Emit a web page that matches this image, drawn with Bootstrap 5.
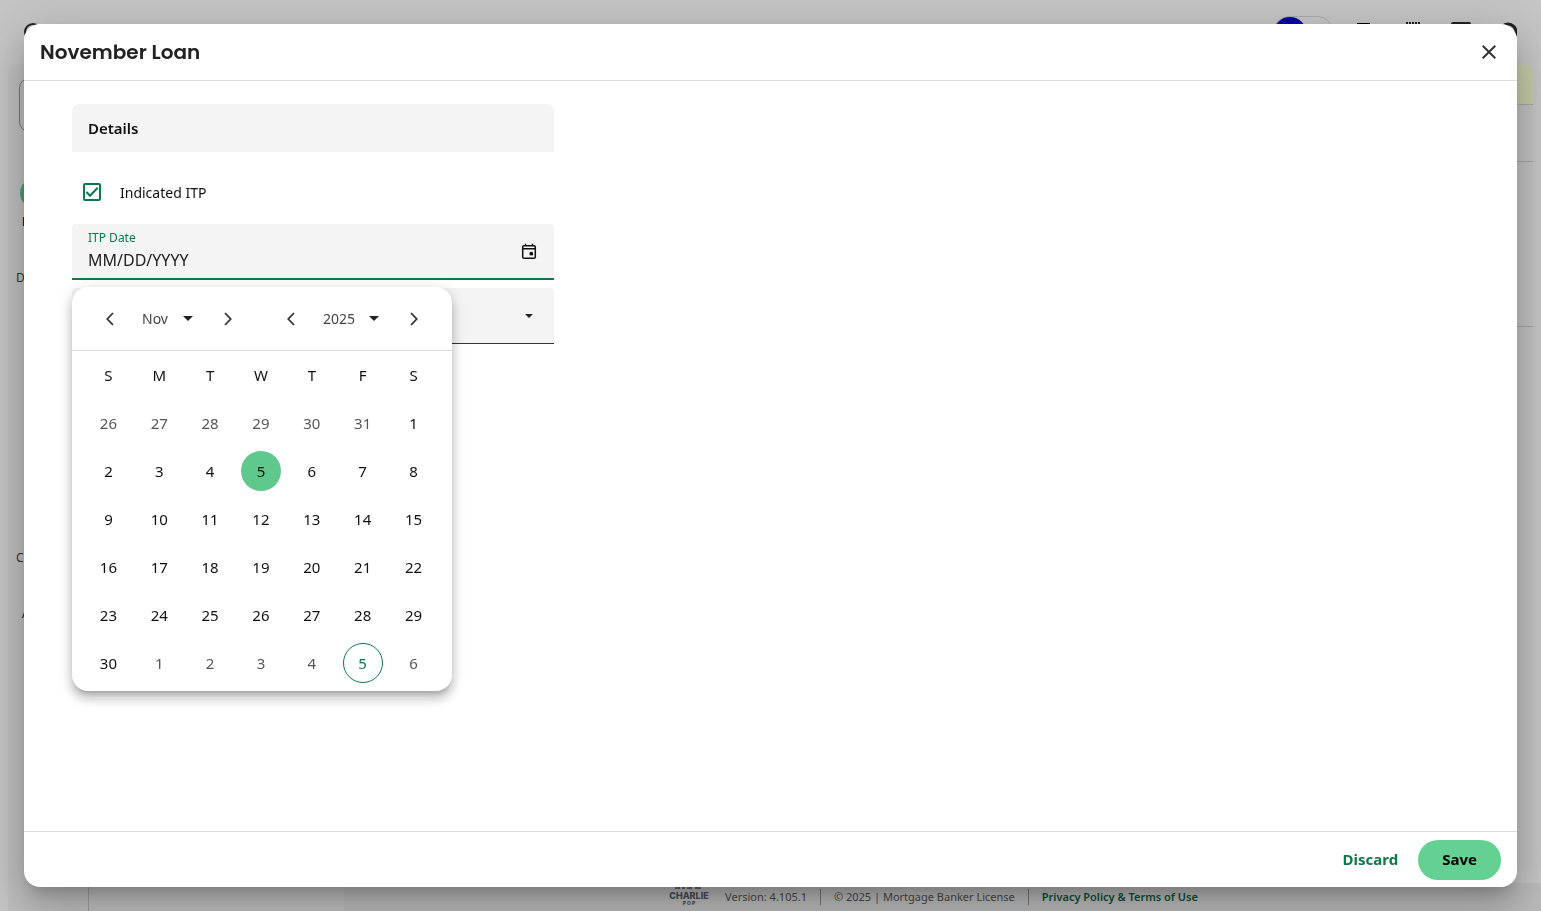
<!DOCTYPE html>
<html lang="en">
<head>
<meta charset="utf-8">
<meta name="viewport" content="width=device-width, initial-scale=1">
<title>November Loan</title>
<link href="https://cdn.jsdelivr.net/npm/bootstrap@5.3.0/dist/css/bootstrap.min.css" rel="stylesheet">
<style>
  :root { --brand: #0b7a4b; --mint: #62d192; --fill: #f4f4f4; --line: #ddd; }
  body { font-family: "Noto Sans", "Open Sans", sans-serif; font-size: 14px; background: #c5c5c5; color: #111; }

  /* Dimmed page behind the dialog */
  .topbar { height: 64px; padding: 0 24px; }
  .brand-ring { width: 18px; height: 18px; border: 2px solid #222; border-radius: 50%; }
  .user-pill { width: 60px; height: 32px; border: 1px solid #aaa; border-radius: 16px; }
  .user-dot { width: 32px; height: 30px; border-radius: 50%; background: #0808a0; }
  .top-icons { gap: 24px; }
  .rail { width: 81px; margin-left: 8px; border-right: 1px solid #a0a0a0; border-top-left-radius: 12px; background: #c0c0c0; font-size: 12px; color: #333; }
  .rail-box { height: 54px; margin: 14px 8px 0 11px; border: 1px solid #777; border-radius: 10px; }
  .rail-dot { width: 30px; height: 30px; margin: 46px 0 5px 12px; border-radius: 50%; background: #4a9e72; }
  .rail-main { padding-left: 14px; font-weight: 700; color: #000; }
  .rail-text { padding-left: 8px; }
  .gap-small { margin-top: 38px; }
  .gap-large { margin-top: 262px; }
  .panel { width: 255px; background: #c0c0c0; }
  .content-area { min-width: 0; }
  .sheet { margin-right: 8px; background: #c2c2c2; border-radius: 0 8px 8px 0; }
  .sheet div { border-bottom: 1px solid #a6a6a6; }
  .sheet-tint { height: 41px; background: #c5cbaa; border-top-right-radius: 8px; }
  .sheet-a { height: 57px; }
  .sheet-b { height: 165px; }
  .foot { height: 28px; margin-top: 11px; padding-right: 20px; font-size: 11px; color: #474747; background: #bbb; }
  .foot a { color: #0a5233; font-weight: 600; }
  .foot .bar { width: 1px; height: 16px; margin: 0 13px; background: #777; }

  /* Dialog */
  .loan-modal { --bs-modal-margin: 24px; --bs-modal-width: none; --bs-modal-border-radius: 16px; --bs-modal-border-width: 0; }
  .loan-modal .modal-dialog { margin: 24px; max-width: none; height: calc(100% - 48px); }
  .loan-modal .modal-content { height: 100%; overflow: hidden; box-shadow: 0 11px 15px -7px rgba(0,0,0,.2), 0 24px 38px 3px rgba(0,0,0,.14), 0 9px 46px 8px rgba(0,0,0,.12); }
  .loan-modal .modal-header { height: 56px; padding: 0 16px; border: 0; }
  .loan-modal .modal-title { font-family: Poppins, Inter, sans-serif; font-size: 20px; font-weight: 600; color: #222; }
  .loan-modal .modal-body { padding: 24px 0 24px 48px; box-shadow: inset 0 1px var(--line); }
  .loan-modal .modal-footer { height: 56px; padding: 0 16px; border-top: 1px solid var(--line); }
  .icon-btn { width: 40px; height: 40px; padding: 0; border: 0; background: none; color: #333; display: inline-flex; align-items: center; justify-content: center; }
  .close-btn { width: 24px; }
  .btn-pill { height: 40px; padding: 0 24px; border: 0; border-radius: 20px; font-size: 15px; font-weight: 700; }
  .btn-discard { padding: 0 20px; color: var(--brand); }
  .btn-save, .btn-save:hover { background: var(--mint); color: #000; }

  .section-head { height: 48px; margin-bottom: 20px; padding: 0 16px; background: var(--fill); border-radius: 8px 8px 0 0; font-size: 15px; font-weight: 600; }
  .check-row { height: 40px; margin-bottom: 12px; padding: 0 11px; gap: 19px; }
  .check-row .form-check-input { width: 18px; height: 18px; margin: 0; border: 2px solid var(--brand); border-radius: 2px; background-color: #fff; }
  .check-row .form-check-input:checked { background-size: 18px; background-image: url("data:image/svg+xml,%3Csvg xmlns='http://www.w3.org/2000/svg' viewBox='0 0 18 18'%3E%3Cpath fill='none' stroke='%230b7a4b' stroke-width='2' d='M3.500 9l3.500 3.700L14.700 4.800'/%3E%3C/svg%3E"); }
  .field { height: 56px; margin-bottom: 8px; background: var(--fill); border-radius: 4px 4px 0 0; }
  .date-field { padding: 0 5px 0 16px; border-bottom: 2px solid var(--brand); }
  .date-field label { display: block; font-size: 12px; line-height: 16px; color: var(--brand); }
  .date-field input { display: block; width: 100%; height: 26px; padding: 2px 0 0; border: 0; outline: 0; background: none; font-size: 16px; color: #222; }
  .date-field input::placeholder { color: #222; opacity: 1; }
  .plain-select { appearance: none; border: 0; outline: 0; color: #444; background: no-repeat right 15px center / 10px 5px url("data:image/svg+xml,%3Csvg xmlns='http://www.w3.org/2000/svg' viewBox='0 0 10 5'%3E%3Cpath d='M0 0h10L5 5z' fill='%23222'/%3E%3C/svg%3E"); }
  .type-select { display: block; width: 100%; border-bottom: 1px solid #333; background-color: var(--fill); background-position: right 21px center; background-size: 8px 4px; }

  /* Date picker */
  .picker { top: 100%; left: 0; z-index: 5; width: 380px; margin-top: 9px; background: #fff; border-radius: 16px; box-shadow: 0 5px 5px -3px rgba(0,0,0,.2), 0 8px 10px 1px rgba(0,0,0,.14), 0 3px 14px 2px rgba(0,0,0,.12); }
  .picker-head { height: 64px; padding: 0 18px; border-bottom: 1px solid var(--line); }
  .picker-head select { height: 40px; padding: 0 0 0 12px; font-size: 14px; }
  .month-select { width: 78px; }
  .year-select { width: 83px; }
  .picker-grid { padding: 0 13px 4px 11px; }
  .picker-grid table { width: 100%; table-layout: fixed; font-size: 15px; text-align: center; }
  .picker-grid th, .picker-grid td { height: 48px; padding: 0; vertical-align: middle; font-weight: 400; }
  .day { width: 40px; height: 40px; padding: 0; border: 0; border-radius: 50%; background: none; color: #111; }
  .day.other { color: #555; }
  .day.today { background: #5fc88d; }
  .day.picked { border: 1px solid var(--brand); color: var(--brand); }
</style>
</head>
<body>
<div class="d-flex flex-column vh-100 overflow-hidden">
  <header class="topbar d-flex align-items-center justify-content-between">
    <div class="brand-ring"></div>
    <div class="top-icons d-flex align-items-center">
      <div class="user-pill"><div class="user-dot"></div></div>
      <svg width="20" height="20" viewBox="0 0 20 20"><path d="M0 1h13v18H0z"/></svg>
      <svg width="24" height="20" viewBox="0 0 24 20" fill="none" stroke="#222" stroke-width="2"><path stroke-dasharray="2 1" d="M5 1h15"/><path d="M5 3h15v15H5z"/></svg>
      <svg width="24" height="20" viewBox="0 0 24 20" fill="#222"><rect x="2" width="20" height="18" rx="2"/></svg>
      <svg width="20" height="24" viewBox="0 0 20 24" fill="none" stroke="#222" stroke-width="3"><circle cx="11" cy="12" r="8"/></svg>
    </div>
  </header>
  <div class="d-flex flex-grow-1">
    <nav class="rail">
      <div class="rail-box"></div>
      <div class="rail-dot"></div>
      <div class="rail-main">H</div>
      <div class="rail-text gap-small">D</div>
      <div class="rail-text gap-large">C</div>
      <div class="rail-main fw-normal gap-small">A</div>
    </nav>
    <div class="panel"></div>
    <main class="content-area d-flex flex-column flex-grow-1">
      <div class="sheet flex-grow-1">
        <div class="sheet-tint"></div>
        <div class="sheet-a"></div>
        <div class="sheet-b"></div>
      </div>
      <footer class="foot d-flex align-items-center justify-content-center">
        <svg width="58" height="24" viewBox="0 0 58 24" font-family="Inter, sans-serif" font-weight="800" fill="#4c4c55" text-anchor="middle"><path d="M8 3h5m2 0h3m2 0h5m3 0h6" stroke="#666" stroke-width="2"/><text x="22" y="14" font-size="9">CHARLIE</text><text x="22" y="20" font-size="5">P O P</text></svg>
        <span>Version: 4.105.1</span><span class="bar"></span>
        <span>© 2025 | Mortgage Banker License</span><span class="bar"></span>
        <a href="#" class="text-decoration-none">Privacy Policy &amp; Terms of Use</a>
      </footer>
    </main>
  </div>
</div>

<div class="modal loan-modal d-block" role="dialog" aria-modal="true" aria-labelledby="dialogTitle">
  <div class="modal-dialog">
    <div class="modal-content">
      <div class="modal-header">
        <h1 class="modal-title" id="dialogTitle">November Loan</h1>
        <button type="button" class="icon-btn close-btn" aria-label="Close"><svg width="14" height="14" viewBox="0 0 14 14" fill="none" stroke="currentColor" stroke-width="2"><path d="M.7.7l12.600 12.600M13.300.7L.7 13.300"/></svg></button>
      </div>
      <div class="modal-body">
        <form class="row g-0">
          <div class="col-4">
            <h2 class="section-head d-flex align-items-center">Details</h2>
            <div class="check-row d-flex align-items-center">
              <input class="form-check-input" type="checkbox" id="itp" checked>
              <label for="itp">Indicated ITP</label>
            </div>
            <div class="field date-field position-relative d-flex align-items-center">
              <div class="flex-grow-1">
                <label for="itpDate">ITP Date</label>
                <input type="text" id="itpDate" placeholder="MM/DD/YYYY">
              </div>
              <button type="button" class="icon-btn" aria-label="Open calendar"><svg width="16" height="17" viewBox="0 0 16 17" fill="none" stroke="#111" stroke-width="1.500"><rect x="1.700" y="2.700" width="12.600" height="12.600" rx="1.300"/><path d="M2 5.700h12M4.500.7v2M11.500.7v2"/><circle cx="10.300" cy="10.700" r="1.900" fill="#111" stroke="none"/></svg></button>
              <div class="picker position-absolute">
                <div class="picker-head d-flex align-items-center justify-content-between">
                  <div class="d-flex align-items-center">
                    <button type="button" class="icon-btn" aria-label="Previous month"><svg width="8" height="14" viewBox="0 0 8 14" fill="none" stroke="currentColor" stroke-width="1.800"><path d="M7 1L1.300 7 7 13"/></svg></button>
                    <select class="plain-select month-select" aria-label="Month"><option>Nov</option></select>
                    <button type="button" class="icon-btn" aria-label="Next month"><svg width="8" height="14" viewBox="0 0 8 14" fill="none" stroke="currentColor" stroke-width="1.800"><path d="M1 1l5.700 6L1 13"/></svg></button>
                  </div>
                  <div class="d-flex align-items-center">
                    <button type="button" class="icon-btn" aria-label="Previous year"><svg width="8" height="14" viewBox="0 0 8 14" fill="none" stroke="currentColor" stroke-width="1.800"><path d="M7 1L1.300 7 7 13"/></svg></button>
                    <select class="plain-select year-select" aria-label="Year"><option>2025</option></select>
                    <button type="button" class="icon-btn" aria-label="Next year"><svg width="8" height="14" viewBox="0 0 8 14" fill="none" stroke="currentColor" stroke-width="1.800"><path d="M1 1l5.700 6L1 13"/></svg></button>
                  </div>
                </div>
                <div class="picker-grid">
                  <table>
                    <thead><tr><th>S</th><th>M</th><th>T</th><th>W</th><th>T</th><th>F</th><th>S</th></tr></thead>
                    <tbody id="days"></tbody>
                  </table>
                </div>
              </div>
            </div>
            <select class="field plain-select type-select" aria-label="Type"><option></option></select>
          </div>
        </form>
      </div>
      <div class="modal-footer flex-nowrap gap-0">
        <button type="button" class="btn btn-pill btn-discard m-0">Discard</button>
        <button type="button" class="btn btn-pill btn-save m-0">Save</button>
      </div>
    </div>
  </div>
</div>

<script src="https://cdn.jsdelivr.net/npm/bootstrap@5.3.0/dist/js/bootstrap.bundle.min.js"></script>
<script>
  // Six weeks starting on Sunday, October 26, 2025
  const body = document.getElementById('days');
  for (let week = 0; week < 6; week++) {
    const row = body.insertRow();
    for (let d = 0; d < 7; d++) {
      const date = new Date(2025, 9, 26 + week * 7 + d);
      const button = document.createElement('button');
      button.type = 'button';
      button.className = 'day';
      button.textContent = date.getDate();
      if (date.getMonth() !== 10) button.classList.add('other');
      if (date.getDate() === 5) button.classList.add(date.getMonth() === 10 ? 'today' : 'picked');
      row.insertCell().append(button);
    }
  }
</script>
</body>
</html>
